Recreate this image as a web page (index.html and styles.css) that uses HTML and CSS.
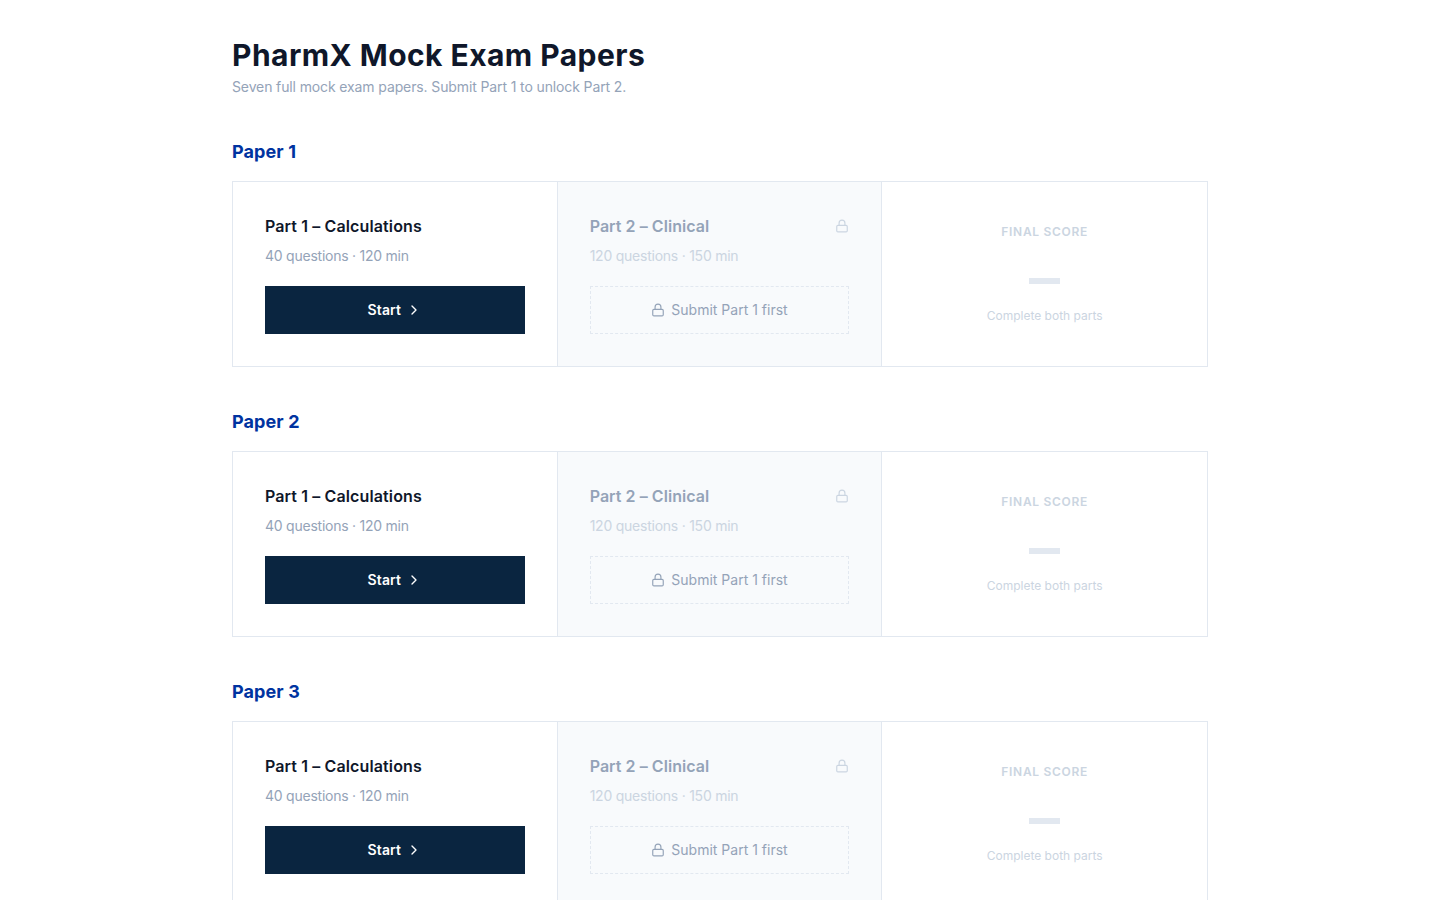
FILE: index.html
```html
<!DOCTYPE html>
<html>
<head>
	<title>PharmX Mock Exam Papers</title>
	<meta charset="UTF-8">
	<link rel="stylesheet" href="styles.css">
</head>
<body>
	<svg class="defs" width="0" height="0">
		<symbol id="lock" viewBox="0 0 24 24"><rect x="3" y="11" width="18" height="11" rx="2"/><path d="M7 11V7a5 5 0 0 1 10 0v4"/></symbol>
		<symbol id="chevron" viewBox="0 0 24 24"><path d="M9 18l6-6-6-6"/></symbol>
	</svg>
	<div class="page">
		<h1>PharmX Mock Exam Papers</h1>
		<p class="intro">Seven full mock exam papers. Submit Part 1 to unlock Part 2.</p>

		<section class="paper">
			<h2>Paper 1</h2>
			<div class="card">
				<div class="cell">
					<div class="part-title">Part 1 – Calculations</div>
					<div class="part-meta">40 questions · 120 min</div>
					<button class="btn-start"><span class="btn-text">Start</span> <svg class="ico-chevron"><use href="#chevron"/></svg></button>
				</div>
				<div class="cell locked">
					<div class="part-head">
						<div class="part-title">Part 2 – Clinical</div>
						<svg class="ico-lock"><use href="#lock"/></svg>
					</div>
					<div class="part-meta">120 questions · 150 min</div>
					<div class="btn-locked"><svg class="ico-lock"><use href="#lock"/></svg> <span class="btn-text">Submit Part 1 first</span></div>
				</div>
				<div class="cell score">
					<div class="score-label">FINAL SCORE</div>
					<div class="score-dash"></div>
					<div class="score-note">Complete both parts</div>
				</div>
			</div>
		</section>

		<section class="paper">
			<h2>Paper 2</h2>
			<div class="card">
				<div class="cell">
					<div class="part-title">Part 1 – Calculations</div>
					<div class="part-meta">40 questions · 120 min</div>
					<button class="btn-start"><span class="btn-text">Start</span> <svg class="ico-chevron"><use href="#chevron"/></svg></button>
				</div>
				<div class="cell locked">
					<div class="part-head">
						<div class="part-title">Part 2 – Clinical</div>
						<svg class="ico-lock"><use href="#lock"/></svg>
					</div>
					<div class="part-meta">120 questions · 150 min</div>
					<div class="btn-locked"><svg class="ico-lock"><use href="#lock"/></svg> <span class="btn-text">Submit Part 1 first</span></div>
				</div>
				<div class="cell score">
					<div class="score-label">FINAL SCORE</div>
					<div class="score-dash"></div>
					<div class="score-note">Complete both parts</div>
				</div>
			</div>
		</section>

		<section class="paper">
			<h2>Paper 3</h2>
			<div class="card">
				<div class="cell">
					<div class="part-title">Part 1 – Calculations</div>
					<div class="part-meta">40 questions · 120 min</div>
					<button class="btn-start"><span class="btn-text">Start</span> <svg class="ico-chevron"><use href="#chevron"/></svg></button>
				</div>
				<div class="cell locked">
					<div class="part-head">
						<div class="part-title">Part 2 – Clinical</div>
						<svg class="ico-lock"><use href="#lock"/></svg>
					</div>
					<div class="part-meta">120 questions · 150 min</div>
					<div class="btn-locked"><svg class="ico-lock"><use href="#lock"/></svg> <span class="btn-text">Submit Part 1 first</span></div>
				</div>
				<div class="cell score">
					<div class="score-label">FINAL SCORE</div>
					<div class="score-dash"></div>
					<div class="score-note">Complete both parts</div>
				</div>
			</div>
		</section>
	</div>
</body>
</html>
```

FILE: styles.css
```css
* {
	margin: 0;
	padding: 0;
	box-sizing: border-box;
}

html, body {
	background: white;
	font-family: "Inter", "Liberation Sans", sans-serif;
}

.defs {
	display: block;
	height: 0;
}

.page {
	width: 976px;
	margin: 0 auto;
	padding-top: 36px;
}

h1 {
	font-size: 30px;
	line-height: 38px;
	font-weight: 700;
	letter-spacing: 0.45px;
	color: #0f172a;
}

.intro {
	margin-top: 3px;
	font-size: 14px;
	line-height: 20px;
	letter-spacing: -0.12px;
	color: #94a3b8;
}

.intro + .paper {
	margin-top: 41px;
}

.paper {
	margin-bottom: 41px;
}

h2 {
	margin-bottom: 15px;
	font-size: 18px;
	line-height: 28px;
	font-weight: 700;
	letter-spacing: 0.1px;
	color: #0033a0;
}

.card {
	display: grid;
	grid-template-columns: repeat(3, 1fr);
	border: 1px solid #e2e8f0;
}

.cell {
	padding: 32px;
	border-right: 1px solid #e2e8f0;
}

.cell:last-child {
	border-right: 0;
}

.locked {
	background: #f8fafc;
}

.part-head {
	display: flex;
	justify-content: space-between;
	align-items: center;
}

.part-title {
	font-size: 16px;
	line-height: 24px;
	font-weight: 600;
	letter-spacing: 0.12px;
	color: #0f172a;
}

.part-meta {
	margin-top: 8px;
	margin-bottom: 20px;
	font-size: 14px;
	line-height: 20px;
	letter-spacing: -0.24px;
	color: #94a3b8;
}

.locked .part-title {
	letter-spacing: 0.05px;
	color: #94a3b8;
}

.locked .part-meta {
	color: #cbd5e1;
}

.btn-start,
.btn-locked {
	display: flex;
	align-items: center;
	justify-content: center;
	width: 100%;
	height: 48px;
	font-family: inherit;
	font-size: 14px;
}

.btn-text {
	margin-bottom: 2px;
}

.btn-start {
	gap: 5px;
	border: 0;
	background: #0a2540;
	color: white;
	font-weight: 600;
	letter-spacing: 0.15px;
}

.btn-locked {
	gap: 6px;
	border: 1px dashed #e2e8f0;
	color: #94a3b8;
}

.ico-lock,
.ico-chevron {
	width: 14px;
	height: 14px;
	fill: none;
	stroke: currentColor;
	stroke-width: 2;
	stroke-linecap: round;
	stroke-linejoin: round;
}

.ico-chevron {
	width: 16px;
	height: 16px;
}

.part-head .ico-lock {
	color: #cbd5e1;
}

.score {
	display: flex;
	flex-direction: column;
	align-items: center;
	justify-content: center;
}

.score-label {
	font-size: 12px;
	line-height: 16px;
	font-weight: 600;
	letter-spacing: 0.7px;
	color: #cbd5e1;
}

.score-dash {
	width: 31px;
	height: 6px;
	margin: 38px 0 24px;
	background: #e2e8f0;
}

.score-note {
	font-size: 12px;
	line-height: 16px;
	color: #cbd5e1;
}
```
